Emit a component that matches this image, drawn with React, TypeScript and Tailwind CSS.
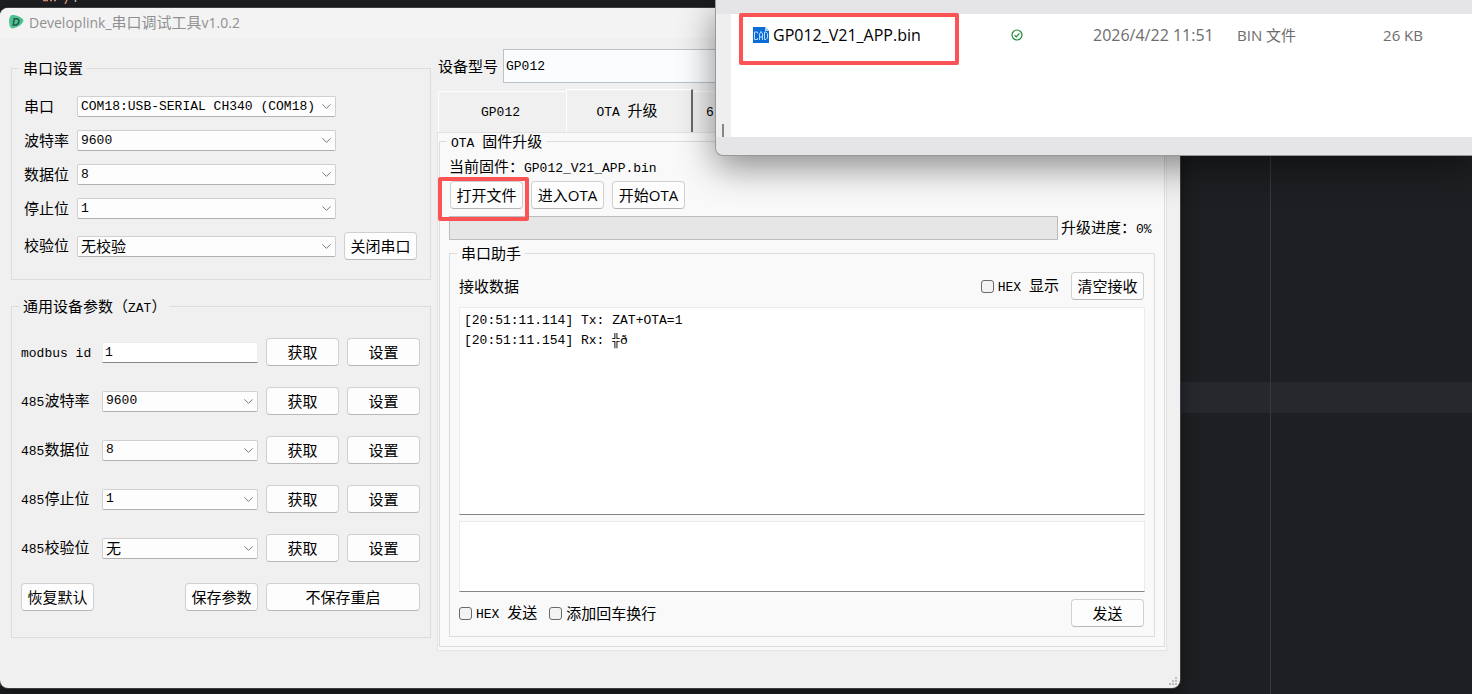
import { useState } from 'react'
import type { ReactNode } from 'react'
import { ChevronDown } from 'lucide-react'

const PORT_FIELDS = [
  { id: 'port', label: '串口', value: 'COM18:USB-SERIAL CH340 (COM18)' },
  { id: 'baud', label: '波特率', value: '9600' },
  { id: 'data', label: '数据位', value: '8' },
  { id: 'stop', label: '停止位', value: '1' },
  { id: 'parity', label: '校验位', value: '无校验' },
]

const DEVICE_FIELDS = [
  { id: 'modbus', label: 'modbus id', value: '1', input: true },
  { id: 'rs-baud', label: '485波特率', value: '9600' },
  { id: 'rs-data', label: '485数据位', value: '8' },
  { id: 'rs-stop', label: '485停止位', value: '1' },
  { id: 'rs-parity', label: '485校验位', value: '无' },
]

const RX_LOG = '[20:51:11.114] Tx: ZAT+OTA=1\n[20:51:11.154] Rx: ╬ð'

const isCjk = (s: string) => /[\u3000-\u9fff\uff00-\uffef]/.test(s)

// Latin runs sit in a smaller monospace face next to the CJK glyphs
function Mixed({ text }: { text: string }) {
  const parts = text.split(/([\u3000-\u9fff\uff00-\uffef]+)/).filter(Boolean)
  return (
    <span className="whitespace-pre">
      {parts.map((p, i) => (
        <span key={i} className={isCjk(p) ? 'text-[15px]' : "font-['Liberation_Mono',monospace] text-[13px]"}>{p}</span>
      ))}
    </span>
  )
}

function Button({ children, className = 'w-[73px]' }: { children: ReactNode; className?: string }) {
  return (
    <button
      type="button"
      className={`h-7 shrink-0 rounded border border-[#d0d0d0] border-b-[#b8b8b8] bg-[#fdfdfd] text-center font-['Open_Sans','Noto_Sans_CJK_SC',sans-serif] text-[15px] leading-5 whitespace-nowrap hover:bg-[#f6f6f6] ${className}`}
    >
      {children}
    </button>
  )
}

function Select({ id, value }: { id: string; value: string }) {
  return (
    <div className="relative min-w-0">
      <select
        id={id}
        defaultValue={value}
        className={`block h-[21px] w-full appearance-none overflow-hidden rounded-xs border border-[#d0d0d0] border-b-[#b0b0b0] bg-[#fdfdfd] pr-5 pl-[3px] leading-[18px] ${isCjk(value) ? 'text-[15px]' : "font-['Liberation_Mono',monospace] text-[13px]"}`}
      >
        <option>{value}</option>
      </select>
      <ChevronDown className="pointer-events-none absolute top-[3px] right-0.5 size-[15px] text-[#707070]" strokeWidth={1.5} />
    </div>
  )
}

function Group({ title, className = '', legend = 'h-5 leading-5', children }: { title: string; className?: string; legend?: string; children: ReactNode }) {
  return (
    <fieldset className={`min-w-0 border border-[#dcdcdc] ${className}`}>
      <legend className={`ml-[7px] px-1 ${legend}`}>
        <Mixed text={title} />
      </legend>
      {children}
    </fieldset>
  )
}

function Check({ label }: { label: string }) {
  return (
    <label className="flex h-5 items-center gap-1 leading-5">
      <input type="checkbox" className="size-[13px] appearance-none rounded-[3px] border border-[#6a6a6a] bg-[#f3f3f3] checked:bg-[#0067c0]" />
      <Mixed text={label} />
    </label>
  )
}

function SerialTool() {
  const [tab, setTab] = useState('ota')
  return (
    <section className="absolute top-2 right-[292px] bottom-[6px] left-0 flex flex-col overflow-hidden rounded-lg bg-[#f0f0f0] shadow-[0_0_0_1px_#3c3f41,0_4px_16px_rgba(0,0,0,0.5)]">
      <header className="flex h-[30px] shrink-0 items-center gap-[5px] bg-[#f3f3f3] pb-0.5 pl-2 text-[#909090]">
        <svg viewBox="0 0 16 16" className="size-4">
          <path d="M3.2 1.2C6 0 15.2 3.200 15.400 6.600C15.500 10 8 14.800 4 14.400C.6 14 0 3.500 3.200 1.200Z" fill="#4cc38f" />
          <path d="M6.300 4.800h2c2 0 3 1 2.600 3.100c-.4 2-1.700 3-3.700 3h-2Z" fill="none" stroke="#24564a" strokeWidth="1.500" />
        </svg>
        <h1 className="font-['Open_Sans','Noto_Sans_CJK_SC',sans-serif] text-[14px]">
          Developlink_<span className="text-[15px]">串口调试工具</span>v1.0.2
        </h1>
      </header>

      <main className="flex min-h-0 flex-1 gap-[6px] pr-[13px] pl-[11px]">
        <div className="flex w-[420px] shrink-0 flex-col gap-4 pt-5">
          <Group title="串口设置">
            <div className="grid grid-cols-[45px_1fr_73px] items-center gap-x-2 gap-y-[13px] pt-[18px] pr-[13px] pb-[19px] pl-3">
              {PORT_FIELDS.map((f) => (
                <div key={f.id} className="contents">
                  <label htmlFor={f.id} className="h-5 leading-[18px]"><Mixed text={f.label} /></label>
                  <Select id={f.id} value={f.value} />
                  {f.id === 'parity' ? <Button>关闭串口</Button> : <span />}
                </div>
              ))}
            </div>
          </Group>

          <Group title="通用设备参数（ZAT）">
            <div className="grid grid-cols-[73px_1fr_73px_73px] items-center gap-x-2 gap-y-[21px] pt-[22px] pr-[10px] pb-[26px] pl-[9px]">
              {DEVICE_FIELDS.map((f) => (
                <div key={f.id} className="contents">
                  <label htmlFor={f.id} className="h-5 leading-[18px]"><Mixed text={f.label} /></label>
                  {f.input ? (
                    <input
                      id={f.id}
                      defaultValue={f.value}
                      className="h-[21px] w-full min-w-0 border border-[#ebebeb] border-b-[#868686] bg-white px-0.5 font-['Liberation_Mono',monospace] text-[13px]"
                    />
                  ) : (
                    <Select id={f.id} value={f.value} />
                  )}
                  <Button>获取</Button>
                  <Button>设置</Button>
                </div>
              ))}
              <Button>恢复默认</Button>
              <Button className="w-[73px] justify-self-end">保存参数</Button>
              <Button className="col-span-2">不保存重启</Button>
            </div>
          </Group>
        </div>

        <div className="flex min-w-0 flex-1 flex-col pt-[11px] pb-[37px]">
          <div className="flex items-center gap-[5px] pl-px">
            <label htmlFor="model" className="h-5 leading-5"><Mixed text="设备型号" /></label>
            <input
              id="model"
              defaultValue="GP012"
              className="h-[34px] min-w-0 flex-1 border border-[#b9c1cb] bg-[#fafcfe] px-0.5 font-['Liberation_Mono',monospace] text-[13px]"
            />
          </div>

          <div role="tablist" className="mt-[6px] flex h-[43px] items-end pl-px leading-5">
            <button type="button" role="tab" aria-selected={tab === 'gp'} onClick={() => setTab('gp')} className="h-[41px] w-[128px] rounded-tl-xs border-t border-l border-white pr-1 pb-0.5">
              <Mixed text="GP012" />
            </button>
            <button type="button" role="tab" aria-selected={tab === 'ota'} onClick={() => setTab('ota')} className="h-[43px] w-[127px] border-t border-r-2 border-l border-t-white border-r-[#696969] border-l-white pr-1">
              <Mixed text="OTA 升级" />
            </button>
            <button type="button" role="tab" aria-selected={tab === '6'} onClick={() => setTab('6')} className="h-[41px] w-[129px] border-t border-white pb-0.5 pl-[13px] text-left">
              <Mixed text="6" />
            </button>
          </div>

          <div className="flex min-h-0 flex-1 flex-col border border-[#e3e3e3] bg-[#f9f9f9] px-px pb-[3px]">
            <Group title="OTA 固件升级" legend="h-4 leading-4" className="flex flex-1 flex-col">
              <div className="flex h-full flex-col px-[9px] pb-[9px]">
                <p className="mt-2 h-5 shrink-0 leading-[18px]"><Mixed text="当前固件：GP012_V21_APP.bin" /></p>
                <div className="relative flex gap-2 pt-1 pl-px">
                  <Button>打开文件</Button>
                  <Button>进入OTA</Button>
                  <Button>开始OTA</Button>
                  <div className="pointer-events-none absolute top-0 -left-[11px] h-11 w-[91px] rounded-xs border-4 border-[#fc5454]" />
                </div>
                <div className="flex items-center gap-[3px] pt-[7px]">
                  <div role="progressbar" aria-label="升级进度" aria-valuenow={0} className="h-6 flex-1 border border-[#bcbcbc] bg-[#e6e6e6]" />
                  <span className="h-5 w-[94px] leading-[18px]"><Mixed text="升级进度：0%" /></span>
                </div>

                <Group title="串口助手" className="mt-[3px] flex flex-1 flex-col">
                  <div className="flex h-full flex-col px-[9px] pb-[9px]">
                    <div className="flex items-center pt-[9px]">
                      <label htmlFor="rx" className="mr-auto h-5 leading-5"><Mixed text="接收数据" /></label>
                      <Check label="HEX 显示" />
                      <Button className="mr-px ml-3 w-[73px]">清空接收</Button>
                    </div>
                    <textarea
                      id="rx"
                      readOnly
                      value={RX_LOG}
                      className="mt-[7px] min-h-0 w-full flex-1 resize-none border border-[#ebebeb] border-b-[#868686] bg-white px-1 py-[3px] font-['Liberation_Mono',monospace] text-[13px] leading-5"
                    />
                    <textarea aria-label="发送数据" className="mt-[6px] h-[71px] w-full resize-none border border-[#ebebeb] border-b-[#868686] bg-white px-1 py-[3px]" />
                    <div className="flex items-center gap-3 pt-[7px]">
                      <Check label="HEX 发送" />
                      <Check label="添加回车换行" />
                      <Button className="mr-px ml-auto w-[73px]">发送</Button>
                    </div>
                  </div>
                </Group>
              </div>
            </Group>
          </div>
        </div>
      </main>

      {/* resize grip */}
      <svg viewBox="0 0 8 8" className="absolute right-[3px] bottom-[3px] size-2 text-[#bdbdbd]" fill="currentColor">
        <path d="M6 0h2v2H6zM3 3h2v2H3zM6 3h2v2H6zM0 6h2v2H0zM3 6h2v2H3zM6 6h2v2H6z" />
      </svg>
    </section>
  )
}

function FileWindow() {
  return (
    <section className="absolute top-0 right-0 left-[715px] flex flex-col overflow-hidden rounded-bl-lg border-b border-l border-[#969a98] bg-[#e5e5e7] pt-[14px] pb-[18px] font-['Open_Sans','Noto_Sans_CJK_SC',sans-serif] text-[15px]">
      <div className="flex h-[123px]">
        <div className="flex w-[15px] shrink-0 items-end bg-[#efefef] pl-[6px]">
          <span className="h-[13px] w-0.5 bg-[#868686]" />
        </div>
        <div className="min-w-0 flex-1 bg-white pr-[49px] pl-[22px]">
          <table className="w-full table-fixed">
            <tbody>
              <tr className="h-[42px] whitespace-nowrap text-[#6d6d6d]">
                <td className="w-[258px] text-base text-black">
                  <div className="flex items-center gap-1">
                    <svg viewBox="0 0 16 16" className="size-4">
                      <path d="M0 0h12l4 4v12H0z" fill="#0a6cd6" />
                      <path d="M12 0l4 4h-4z" fill="#a9d1fb" />
                      <path d="M4.500 6.500V5H1.500v7.500h3V11M6.500 13V7l1.500-2.500L9.500 7v6M6.500 10h3M11.500 5H13l1.500 1.500V11L13 12.500h-1.500z" fill="none" stroke="#b8dcff" strokeWidth="1" />
                    </svg>
                    GP012_V21_APP.bin
                  </div>
                </td>
                <td className="w-[82px]">
                  <svg viewBox="0 0 12 12" className="size-3" fill="none" stroke="#1c8a35">
                    <circle cx="6" cy="6" r="5" strokeWidth="1.200" />
                    <path d="M3.600 6.200l1.600 1.600 3.200-3.400" strokeWidth="1.200" />
                  </svg>
                </td>
                <td className="w-[144px] text-base">2026/4/22 11:51</td>
                <td className="w-[90px]">BIN 文件</td>
                <td className="text-right">26 KB</td>
              </tr>
            </tbody>
          </table>
        </div>
      </div>
      <div className="pointer-events-none absolute top-[13px] left-[23px] h-[52px] w-[220px] rounded-xs border-4 border-[#fc5454]" />
    </section>
  )
}

export default function App() {
  return (
    <div className="relative h-screen min-h-[694px] overflow-hidden bg-[#1e1f22] font-['Noto_Sans_CJK_SC',sans-serif] text-[15px] text-black">
      {/* code editor behind the windows */}
      <div className="absolute inset-x-0 top-[382px] h-[31px] bg-[#26282e]" />
      <div className="absolute inset-y-0 right-[201px] w-px bg-[#36383c]" />
      <svg viewBox="0 0 40 5" className="absolute top-0 left-[42px] h-[5px] w-10" fill="none">
        <path d="M1 .5h5M8 .5h2M12 .5h2M25 0l-2 4" stroke="#cf8e6d" strokeWidth="1.500" />
        <path d="M33.500 0v2" stroke="#bcbec4" strokeWidth="1.500" />
      </svg>
      <SerialTool />
      <div className="absolute top-0 right-0 left-[715px] h-[155px] rounded-bl-lg shadow-[0_12px_36px_rgba(0,0,0,0.45)]" />
      <FileWindow />
    </div>
  )
}
